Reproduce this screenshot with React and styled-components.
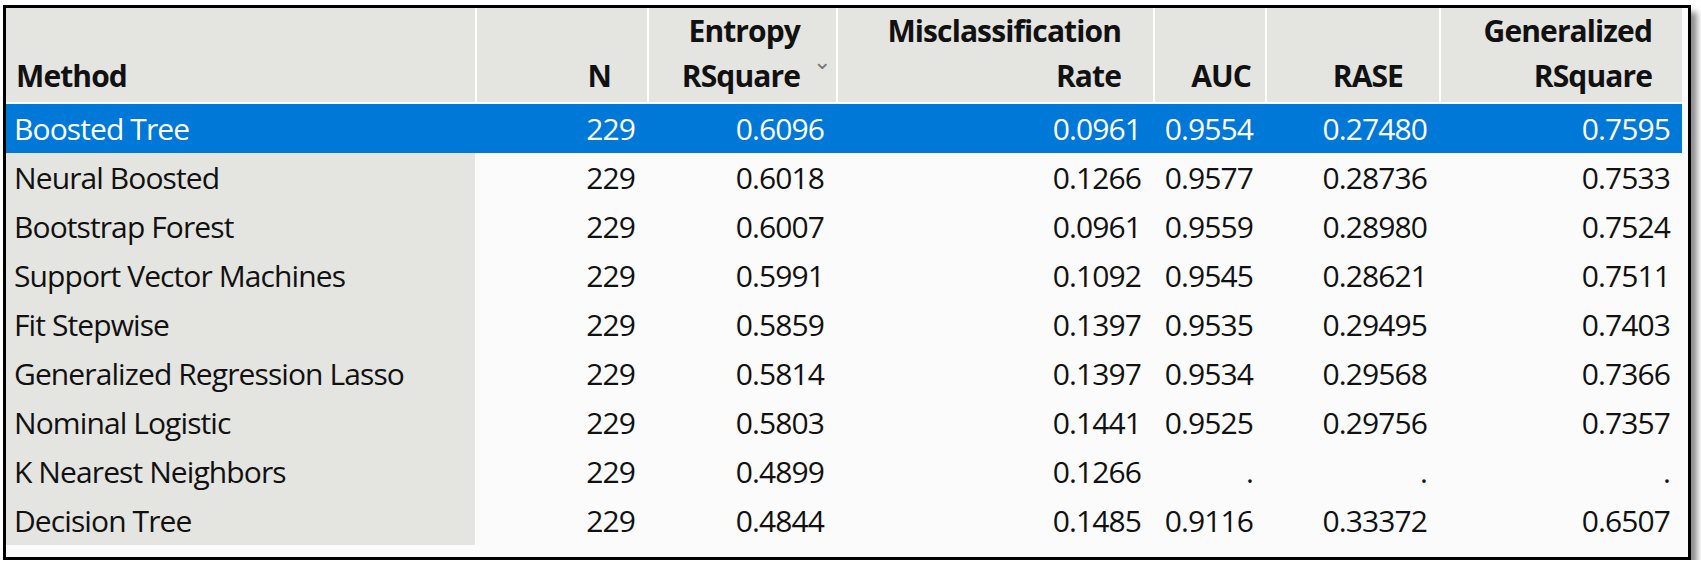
import React from 'react'
import styled, { createGlobalStyle } from 'styled-components'

const Global = createGlobalStyle`
  body { margin: 0; background: #fff; font-family: "Open Sans", "Noto Sans", sans-serif; }
`

const Frame = styled.div`
  margin: 5px 0 0 3px;
  width: 1682px;
  border: 3px solid #000;
  background: #fbfbfb;
  box-shadow: 6px 7px 6px rgba(0,0,0,0.45);
  padding-bottom: 12px;
`

const cols = '469px 172px 189px 317px 112px 174px 243px'

const Grid = styled.div`
  display: grid;
  grid-template-columns: ${cols};
  font-size: 30px;
  letter-spacing: -0.9px;
  color: #111;
`

const HeadCell = styled.div`
  background: #e4e4e0;
  height: 96px;
  box-sizing: border-box;
  border-left: ${p => (p.$first ? 'none' : '2px solid #fff')};
  border-bottom: 2px solid #fff;
  display: flex;
  flex-direction: column;
  justify-content: flex-end;
  align-items: ${p => (p.$left ? 'flex-start' : 'flex-end')};
  padding: 0 ${p => (p.$pr || 32)}px 4px 10px;
  font-weight: 700;
  line-height: 45px;
  position: relative;
`

const Caret = styled.span`
  position: absolute;
  right: 6px;
  top: 30px;
  font-weight: 400;
  font-size: 22px;
  color: #777;
`

const Cell = styled.div`
  height: 49px;
  display: flex;
  align-items: center;
  justify-content: ${p => (p.$left ? 'flex-start' : 'flex-end')};
  padding: 0 ${p => (p.$left ? 0 : 12)}px 0 ${p => (p.$left ? 8 : 0)}px;
  background: ${p => (p.$sel ? '#0078d7' : p.$left ? '#e4e4e0' : 'transparent')};
  color: ${p => (p.$sel ? '#fff' : '#111')};
  white-space: nowrap;
`

const rows = [
  ['Boosted Tree', '229', '0.6096', '0.0961', '0.9554', '0.27480', '0.7595'],
  ['Neural Boosted', '229', '0.6018', '0.1266', '0.9577', '0.28736', '0.7533'],
  ['Bootstrap Forest', '229', '0.6007', '0.0961', '0.9559', '0.28980', '0.7524'],
  ['Support Vector Machines', '229', '0.5991', '0.1092', '0.9545', '0.28621', '0.7511'],
  ['Fit Stepwise', '229', '0.5859', '0.1397', '0.9535', '0.29495', '0.7403'],
  ['Generalized Regression Lasso', '229', '0.5814', '0.1397', '0.9534', '0.29568', '0.7366'],
  ['Nominal Logistic', '229', '0.5803', '0.1441', '0.9525', '0.29756', '0.7357'],
  ['K Nearest Neighbors', '229', '0.4899', '0.1266', '.', '.', '.'],
  ['Decision Tree', '229', '0.4844', '0.1485', '0.9116', '0.33372', '0.6507'],
]

export default function App() {
  return (
    <>
      <Global />
      <Frame>
        <Grid>
          <HeadCell $first $left>Method</HeadCell>
          <HeadCell $pr={36}>N</HeadCell>
          <HeadCell $pr={36}><span>Entropy</span><span>RSquare</span><Caret>⌄</Caret></HeadCell>
          <HeadCell><span>Misclassification</span><span>Rate</span></HeadCell>
          <HeadCell $pr={14}>AUC</HeadCell>
          <HeadCell $pr={36}>RASE</HeadCell>
          <HeadCell $pr={30}><span>Generalized</span><span>RSquare</span></HeadCell>
          {rows.map((r, i) =>
            r.map((v, j) => (
              <Cell key={i + '-' + j} $left={j === 0} $sel={i === 0}>{v}</Cell>
            ))
          )}
        </Grid>
      </Frame>
    </>
  )
}
